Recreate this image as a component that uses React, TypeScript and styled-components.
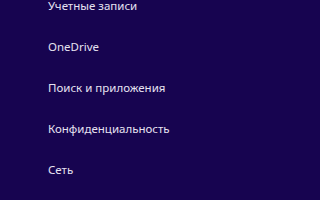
import styled, { createGlobalStyle } from 'styled-components';

const GlobalStyle = createGlobalStyle`
  html, body {
    margin: 0;
    padding: 0;
    background: #170450;
  }
`;

const Page = styled.div`
  width: 320px;
  height: 200px;
  overflow: hidden;
  background: #170450;
`;

const MenuList = styled.ul`
  list-style: none;
  margin: 0;
  padding: 0 0 0 48px;
  display: flex;
  flex-direction: column;
  gap: 30px;
`;

const MenuItem = styled.li`
  font-family: 'Noto Sans', 'Open Sans', sans-serif;
  font-size: 11.5px;
  line-height: 11px;
  color: #e6e2f0;

  &:hover {
    cursor: pointer;
  }
`;

const items = [
  'Учетные записи',
  'OneDrive',
  'Поиск и приложения',
  'Конфиденциальность',
  'Сеть',
];

function App() {
  return (
    <Page>
      <GlobalStyle />
      <MenuList>
        {items.map((item) => (
          <MenuItem key={item}>{item}</MenuItem>
        ))}
      </MenuList>
    </Page>
  );
}

export default App;
